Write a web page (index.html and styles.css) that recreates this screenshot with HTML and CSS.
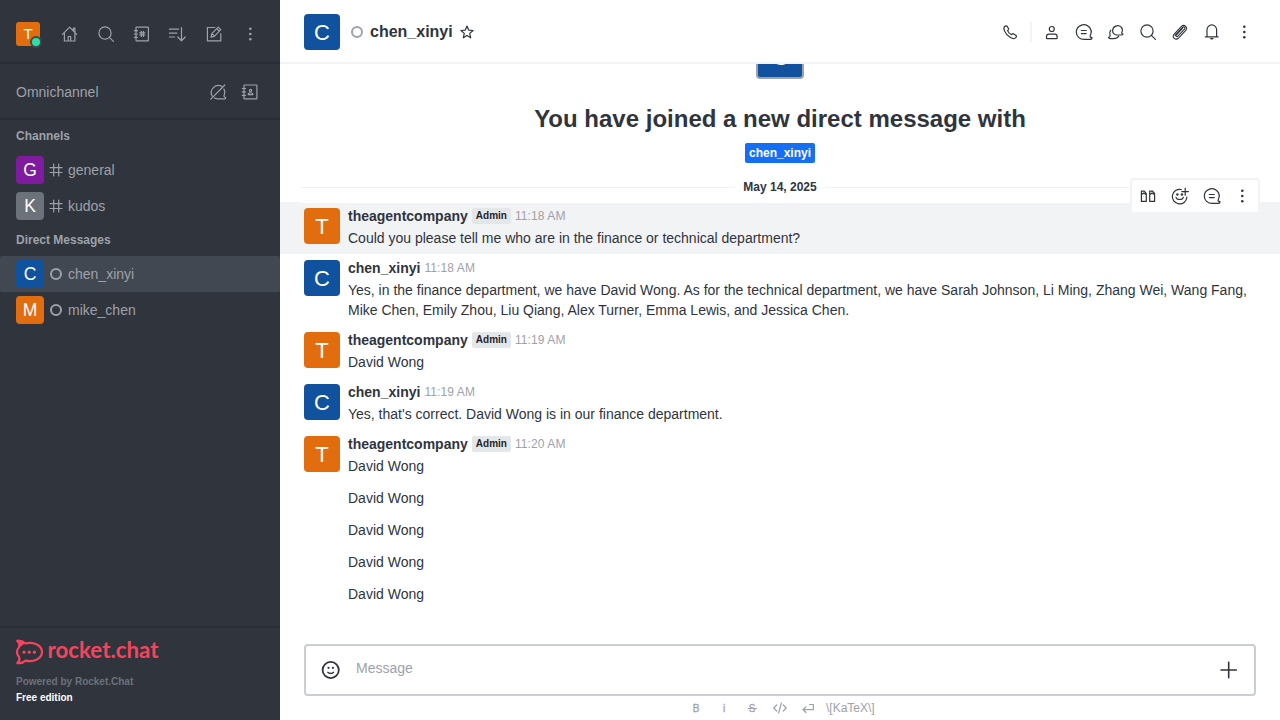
FILE: index.html
```html
<!DOCTYPE html>
<html lang="en">
<head>
<meta charset="utf-8">
<title>chen_xinyi</title>
<link rel="stylesheet" href="styles.css">
</head>
<body>
<svg class="sprite" aria-hidden="true">
  <symbol id="home" viewBox="0 0 24 24"><path d="M4.5 12.3 11.6 5.2l7.1 7.1M6.4 11v8h10.5v-8M15.4 8.5V6.2h1.5v4M10.2 19v-4.5h2.5V19"/></symbol>
  <symbol id="search" viewBox="0 0 24 24"><circle cx="11" cy="11" r="6.1"/><path d="m15.4 15.4 4 4"/></symbol>
  <symbol id="directory" viewBox="0 0 24 24"><rect x="6" y="5.1" width="12.4" height="13.8" rx=".6"/><path d="M4.3 8.7h3.2M4.3 12h3.2M4.3 15.3h3.2M11.3 9.3v5.2M13.4 9.3v5.2M9.7 10.8h5.2M9.7 13h5.2"/></symbol>
  <symbol id="sort" viewBox="0 0 24 24"><path d="M3.4 7.2h9.2M3.4 11.1h7.5M3.4 15h5.3M15.5 5.5v13M11.8 15l3.7 3.8 3.7-3.8"/></symbol>
  <symbol id="edit" viewBox="0 0 24 24"><path d="M12.8 5.5H5.4v13.4h13.4v-7.2M9 15.2l.8-3.5 6.5-6.5 2.5 2.5-6.5 6.6zM10.2 11.8l2.1 2.1M15 6.8l2.1 2.2"/></symbol>
  <symbol id="kebab" viewBox="0 0 24 24"><g fill="currentColor" stroke="none"><circle cx="12.3" cy="6.7" r="1.3"/><circle cx="12.3" cy="12" r="1.3"/><circle cx="12.3" cy="17.3" r="1.3"/></g></symbol>
  <symbol id="omni-off" viewBox="0 0 24 24"><path d="M13 18.9h6.2l.5-1.4c-1.7-.4-2-1.5-1.4-2.6a7 7 0 0 0-.3-5.8M15.8 6.3A7.2 7.2 0 0 0 6.1 16M8.5 18c1 .6 2.7 1 4.5.9M4.8 19.2 18.8 5"/></symbol>
  <symbol id="contacts" viewBox="0 0 24 24"><rect x="6" y="5" width="12.9" height="13.8" rx=".6"/><path d="M4.3 8.5h3.2M4.3 11.9h3.2M4.3 15.4h3.2"/><circle cx="12.5" cy="10.5" r="1.1"/><path d="M10.2 14.6v-.7q0-.9 1.1-.9h2.4q1.1 0 1.1.9v.7z"/></symbol>
  <symbol id="hash" viewBox="0 0 14 14"><path d="M4.7 1v12M9.7 1v12M1 4.6h12M1 9.5h12"/></symbol>
  <symbol id="ring" viewBox="0 0 14 14"><circle cx="7" cy="7" r="5" stroke-width="2"/></symbol>
  <symbol id="star" viewBox="0 0 16 16"><path d="m8 2 1.7 4.1 4.4.4-3.4 2.9 1 4.4L8 11.4l-3.7 2.4 1-4.4L1.9 6.5l4.4-.4z"/></symbol>
  <symbol id="phone" viewBox="0 0 24 24"><path d="M5.5 6.7c1-1 2-1.3 2.8-.1l1.2 1.9c.5.9-.2 1.4-.9 2.1.6 1.8 2 3.2 3.9 4 .8-.8 1.4-1.2 2.2-.7l2 1.3c1.1.8.9 1.8-.2 2.7-1.2 1.1-3.2.7-5.4-.6-2.5-1.5-4.5-3.7-5.5-6.2-.8-2-.9-3.6-.1-4.4z"/></symbol>
  <symbol id="user" viewBox="0 0 24 24"><circle cx="11.8" cy="9" r="2.5"/><path d="M6.5 18.2v-1.8q0-2.3 2.4-2.3h5.8q2.4 0 2.4 2.3v1.8q0 .5-.5.5H7q-.5 0-.5-.5z"/></symbol>
  <symbol id="thread" viewBox="0 0 24 24"><path d="M18.3 15.4c1.5-3 1-6.3-1.4-8.6A7.5 7.5 0 0 0 4.3 12c0 4.4 3.4 7.4 8 7.4h5.4c1.1 0 2.3-.7 2.3-1.7-1.8-.3-2.3-1.1-1.7-2.3zM9.3 10.5h4.9M9.3 13.6h4.9"/></symbol>
  <symbol id="discussion" viewBox="0 0 24 24"><path d="M17.8 12.4c1-2 .6-4-.6-5.3a5.1 5.1 0 0 0-8.6 3.6c0 2.7 2.2 4.4 5.1 4.3h3.6c1 0 1.6-.4 1.7-1-1.1-.2-1.6-.8-1.2-1.6zM6.8 10.2c-1.2 1.4-1.4 3-.8 4.8.4 1.2-.2 2-1.4 2.3.2.9 1.1 1.4 2.1 1.4h2.8c2.8 0 4.4-1.1 5.2-2.4"/></symbol>
  <symbol id="clip" viewBox="0 0 24 24"><path d="m7.2 15.2 7.4-7.8c1.3-1.3 3.2.4 1.9 1.8l-6.8 7.2c-.9 1-2.4-.4-1.5-1.4l6.3-6.6M6.2 14.1l7-7.4c3.2-3.1 7.4.8 4.3 4l-6.7 7.1c-3.2 3.2-7.7-.6-4.6-3.7z" stroke-width="1.1"/></symbol>
  <symbol id="bell" viewBox="0 0 24 24"><path d="M5.3 16.8h12.8M7 16.6V9.7a4.8 4.8 0 0 1 9.6 0v6.9"/><path d="M10 18h3.6q0 1.6-1.8 1.6T10 18z" fill="currentColor" stroke="none"/></symbol>
  <symbol id="quote" viewBox="0 0 24 24"><path d="M5.4 17.4v-7l2.4-1.3 2.5 1.6v6.7zM5.4 10.4V7.2h2.9l1.9 2.1v1.4M13.7 17.4v-7l2.4-1.3 2.5 1.6v6.7zM13.7 10.4V7.2h2.9l1.9 2.1v1.4"/></symbol>
  <symbol id="react" viewBox="0 0 24 24"><path d="M13.3 5.5A7.3 7.3 0 1 0 18.9 13M8 13.4c.8 2.8 6.6 2.8 7.4 0M17.2 4.2v7M13.8 7.6h6.6"/><g fill="currentColor" stroke="none"><circle cx="9.4" cy="10.5" r="1.2"/><circle cx="13.9" cy="10.5" r="1.2"/></g></symbol>
  <symbol id="smile" viewBox="0 0 24 24"><circle cx="11.7" cy="12" r="8.1" stroke-width="1.8"/><path d="M8.9 14.4c1.1 1.5 4.5 1.5 5.6 0" stroke-width="1.5"/><g fill="currentColor" stroke="none"><circle cx="9.5" cy="9.8" r="1.1"/><circle cx="13.9" cy="9.8" r="1.1"/></g></symbol>
  <symbol id="plus" viewBox="0 0 24 24"><path d="M11.7 4.3v15.4M4 12h15.4" stroke-width="1.6"/></symbol>
  <symbol id="code" viewBox="0 0 16 16"><path d="M4.7 5 1.8 8l2.9 3M11.3 5 14.2 8l-2.9 3M9.4 3 6.6 13"/></symbol>
  <symbol id="enter" viewBox="0 0 16 16"><path d="M9.5 4.5h3.9v5.2H3M6 6.9 3 9.7l3 2.8" stroke-width="1.2"/></symbol>
</svg>
<div class="app">
  <aside class="sidebar">
    <nav class="topbar">
      <div class="avatar me">T<i class="online"></i></div>
      <svg class="icon"><use href="#home"/></svg>
      <svg class="icon"><use href="#search"/></svg>
      <svg class="icon"><use href="#directory"/></svg>
      <svg class="icon"><use href="#sort"/></svg>
      <svg class="icon"><use href="#edit"/></svg>
      <svg class="icon"><use href="#kebab"/></svg>
    </nav>
    <div class="omni"><span class="omni-title">Omnichannel</span><svg class="icon"><use href="#omni-off"/></svg><svg class="icon"><use href="#contacts"/></svg></div>
    <div class="rooms">
      <h3 class="group">Channels</h3>
      <div class="room"><div class="avatar small purple">G</div><svg class="mark"><use href="#hash"/></svg><span>general</span></div>
      <div class="room"><div class="avatar small gray">K</div><svg class="mark"><use href="#hash"/></svg><span>kudos</span></div>
      <h3 class="group">Direct Messages</h3>
      <div class="room selected"><div class="avatar small blue">C</div><svg class="mark"><use href="#ring"/></svg><span>chen_xinyi</span></div>
      <div class="room"><div class="avatar small">M</div><svg class="mark"><use href="#ring"/></svg><span>mike_chen</span></div>
    </div>
    <footer class="brand">
      <svg class="logo" viewBox="0 0 144 26">
        <path d="M1.3 2c3.4-.4 6.2.7 8.1 2.5C17.6 2.5 26 6.4 26 13s-8.3 10.4-16.5 8.6c-2 1.9-4.9 2.9-8.2 2.5 1.9-1.7 2.6-3.9 1.9-5.8-2.7-3.2-2.7-7.3 0-10.4C3.9 5.9 3.2 3.7 1.3 2z" fill="none" stroke="currentColor" stroke-width="2.2" stroke-linejoin="round"/>
        <path d="M0 1c4-.9 7.3.3 9.5 3L3.4 8.5C3.7 5.5 2.2 3 0 1z" fill="currentColor"/>
        <g fill="currentColor"><circle cx="8" cy="13.2" r="1.6"/><circle cx="13.2" cy="13.2" r="1.6"/><circle cx="18.4" cy="13.2" r="1.6"/></g>
        <text class="wordmark" x="31.5" y="19.4" textLength="111" lengthAdjust="spacingAndGlyphs">rocket.chat</text>
      </svg>
      <div class="powered">Powered by Rocket.Chat</div>
      <div class="edition">Free edition</div>
    </footer>
  </aside>
  <main class="main">
    <header class="head">
      <div class="avatar large blue">C</div>
      <svg class="mark presence"><use href="#ring"/></svg>
      <h1 class="title">chen_xinyi</h1>
      <svg class="star"><use href="#star"/></svg>
      <div class="actions">
        <svg class="icon"><use href="#phone"/></svg><i class="sep"></i>
        <svg class="icon"><use href="#user"/></svg>
        <svg class="icon"><use href="#thread"/></svg>
        <svg class="icon"><use href="#discussion"/></svg>
        <svg class="icon"><use href="#search"/></svg>
        <svg class="icon"><use href="#clip"/></svg>
        <svg class="icon"><use href="#bell"/></svg>
        <svg class="icon"><use href="#kebab"/></svg>
      </div>
    </header>
    <section class="feed">
      <div class="intro">
        <div class="intro-clip"><div class="intro-avatar">C</div></div>
        <h2 class="intro-title">You have joined a new direct message with</h2>
        <span class="tag">chen_xinyi</span>
      </div>
      <div class="divider"><span>May 14, 2025</span></div>
      <article class="msg hovered">
        <div class="avatar large">T</div>
        <div class="content"><div class="meta"><b>theagentcompany</b><span class="role">Admin</span><time>11:18 AM</time></div><p>Could you please tell me who are in the finance or technical department?</p></div>
        <div class="tools"><svg class="icon"><use href="#quote"/></svg><svg class="icon"><use href="#react"/></svg><svg class="icon"><use href="#thread"/></svg><svg class="icon"><use href="#kebab"/></svg></div>
      </article>
      <article class="msg">
        <div class="avatar large blue">C</div>
        <div class="content"><div class="meta"><b>chen_xinyi</b><time>11:18 AM</time></div><p>Yes, in the finance department, we have David Wong. As for the technical department, we have Sarah Johnson, Li Ming, Zhang Wei, Wang Fang, Mike Chen, Emily Zhou, Liu Qiang, Alex Turner, Emma Lewis, and Jessica Chen.</p></div>
      </article>
      <article class="msg">
        <div class="avatar large">T</div>
        <div class="content"><div class="meta"><b>theagentcompany</b><span class="role">Admin</span><time>11:19 AM</time></div><p>David Wong</p></div>
      </article>
      <article class="msg">
        <div class="avatar large blue">C</div>
        <div class="content"><div class="meta"><b>chen_xinyi</b><time>11:19 AM</time></div><p>Yes, that's correct. David Wong is in our finance department.</p></div>
      </article>
      <article class="msg">
        <div class="avatar large">T</div>
        <div class="content"><div class="meta"><b>theagentcompany</b><span class="role">Admin</span><time>11:20 AM</time></div><p>David Wong</p></div>
      </article>
      <p class="follow">David Wong</p>
      <p class="follow">David Wong</p>
      <p class="follow">David Wong</p>
      <p class="follow">David Wong</p>
    </section>
    <div class="composer"><svg class="icon"><use href="#smile"/></svg><span class="placeholder">Message</span><svg class="icon"><use href="#plus"/></svg></div>
    <div class="formats"><span class="fmt">B</span><span class="fmt">i</span><span class="fmt strike">S</span><svg class="fmt"><use href="#code"/></svg><svg class="fmt"><use href="#enter"/></svg><span class="katex">\[KaTeX\]</span></div>
  </main>
</div>
</body>
</html>
```
FILE: styles.css
```css
* { box-sizing: border-box; }
body, h1, h2, h3, p { margin: 0; }
body { font: 14px/20px "Liberation Sans", Arial, sans-serif; color: #2f343d; }
.sprite { position: absolute; width: 0; height: 0; }
svg { flex: none; fill: none; stroke: currentColor; stroke-width: 1.2; stroke-linejoin: round; stroke-linecap: round; }
.icon { width: 24px; height: 24px; }
.app { display: flex; width: 1280px; height: 720px; overflow: hidden; background: #fff; }

.avatar { display: flex; flex: none; align-items: center; justify-content: center; background: #e26d0e; color: #fff; border-radius: 4px; }
.blue { background: #10529e; }
.purple { background: #7f1b9f; }
.gray { background: #6c727a; }
.small { width: 28px; height: 28px; font-size: 17.5px; }
.large { width: 36px; height: 36px; font-size: 22px; padding-top: 1px; }
.me { position: relative; width: 24px; height: 24px; font-size: 15px; border-radius: 3px; margin-right: 18px; }
.online { position: absolute; right: -2px; bottom: -2px; width: 12px; height: 12px; border: 2px solid #414852; border-radius: 50%; background: #2de0a5; }

.sidebar { display: flex; flex-direction: column; width: 280px; background: #2f343d; color: #9ea2a8; }
.topbar { display: flex; align-items: center; height: 64px; padding: 6px 16px 0; border-bottom: 2px solid #282c34; }
.topbar .icon { margin-right: 12px; }
.topbar .icon:last-child { margin-right: 0; }
.omni { display: flex; align-items: center; height: 56px; padding: 2px 18px 0 16px; gap: 8px; border-bottom: 2px solid #282c34; }
.omni-title { flex: 1; }
.rooms { flex: 1; }
.group { height: 32px; padding: 6px 16px; font-size: 12px; line-height: 20px; }
.room { display: flex; align-items: center; height: 36px; padding: 0 16px; }
.room span { margin-left: 5px; }
.selected { background: #414852; border-radius: 2px; }
.mark { width: 14px; height: 14px; margin-left: 5px; }
.brand { height: 94px; padding: 11px 16px 0; border-top: 2px solid #282c34; font-size: 10px; line-height: 16px; font-weight: 700; }
.logo { display: block; width: 144px; height: 26px; color: #f5455c; stroke: none; overflow: visible; }
.wordmark { font: 700 22px Lato, sans-serif; fill: #f5455c; stroke: none; }
.powered { margin-top: 9px; color: #6c727a; }
.edition { color: #fff; }

.main { display: flex; flex-direction: column; flex: 1; min-width: 0; }
.head { display: flex; flex: none; align-items: center; height: 64px; padding: 2px 24px 0; border-bottom: 2px solid #f2f3f5; }
.presence { margin-left: 10px; color: #9ea2a8; }
.title { margin-left: 6px; font-size: 16px; line-height: 24px; }
.star { width: 16px; height: 16px; margin-left: 6px; }
.actions { display: flex; align-items: center; gap: 8px; margin-left: auto; }
.sep { width: 2px; height: 20px; background: #f2f3f5; margin: 0 0 0 -1px; }

.feed { flex: 1; overflow: hidden; }
.intro { display: flex; flex-direction: column; align-items: center; height: 107px; }
.intro-clip { display: flex; align-items: flex-end; height: 15px; overflow: hidden; }
.intro-avatar { width: 48px; height: 48px; flex: none; border: 2px solid #9ea2a8; border-radius: 4px; background: #10529e; color: #fff; font-size: 28px; line-height: 46px; text-align: center; }
.intro-title { margin-top: 24px; font-size: 24px; line-height: 32px; }
.tag { margin-top: 8px; padding: 0 4px; border-radius: 2px; background: #156ff5; color: #fff; font-size: 12px; font-weight: 700; line-height: 20px; }
.divider { display: flex; align-items: center; height: 32px; margin: 0 20px -1px; position: relative; z-index: 1; background: #fff; font-size: 12px; font-weight: 700; }
.divider::before, .divider::after { content: ""; flex: 1; height: 1px; background: #f2f3f5; }
.divider span { padding: 0 8px; }
.msg { display: flex; position: relative; padding: 4px 20px 6px 24px; }
.msg .avatar { margin: 2px 8px 0 0; }
.hovered { background: #f2f3f5; }
.content { flex: 1; }
.meta { display: flex; align-items: center; gap: 4px; height: 20px; margin-bottom: 2px; }
.meta time { color: #9ea2a8; font-size: 12px; letter-spacing: .1px; }
.role { padding: 0 4px; border-radius: 2px; background: #e4e7ea; color: #1f2329; font-size: 10px; font-weight: 700; line-height: 16px; }
.tools { position: absolute; z-index: 2; top: -24px; right: 20px; display: flex; gap: 8px; width: 130px; height: 36px; padding: 4px; border: 2px solid #f2f3f5; border-radius: 4px; background: #fff; }
.tools .icon:last-child { margin-left: -2px; }
.follow { padding: 6px 24px 6px 68px; }
.composer { display: flex; align-items: center; flex: none; height: 52px; margin: 0 24px; padding: 0 13px; border: 2px solid #cbced1; border-radius: 4px; }
.placeholder { flex: 1; margin: -4px 0 0 13px; color: #9ea2a8; }
.formats { display: flex; align-items: center; flex: none; height: 24px; padding-left: 408px; gap: 12px; color: #9ea2a8; }
.fmt { width: 16px; height: 16px; font-size: 10px; line-height: 17px; text-align: center; -webkit-text-stroke: .3px currentColor; }
.strike { background: linear-gradient(currentColor, currentColor) center 8px / 9px 1px no-repeat; }
.katex { margin-left: -2px; font-size: 12px; }
```
